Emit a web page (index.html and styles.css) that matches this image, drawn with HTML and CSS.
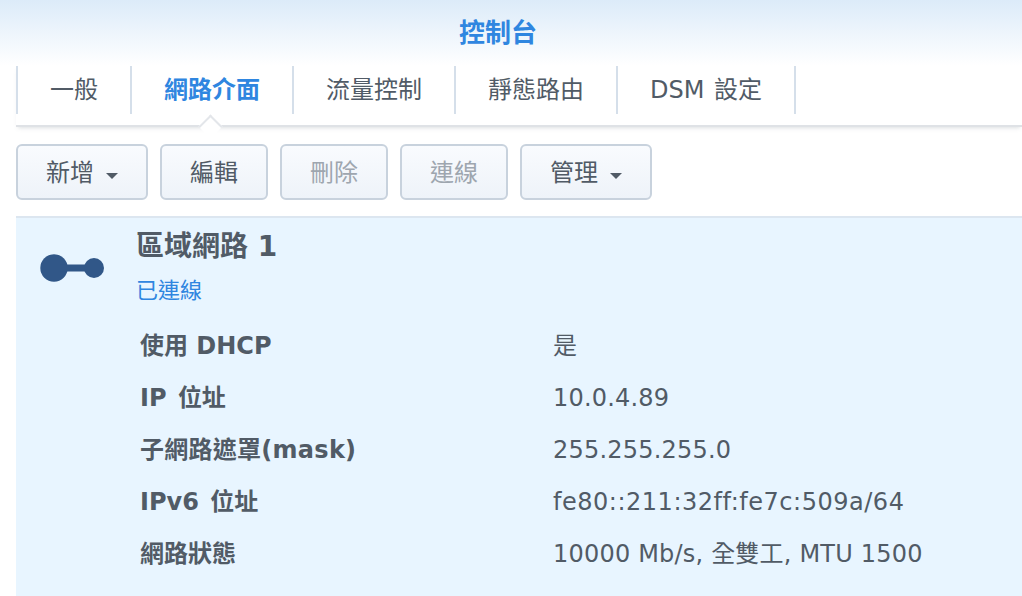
FILE: index.html
```html
<!DOCTYPE html>
<html lang="zh-Hant">
<head>
<meta charset="utf-8">
<title>控制台</title>
<link rel="stylesheet" href="styles.css">
</head>
<body>
<header class="titlebar">控制台</header>
<div class="content">
  <nav class="tabs">
    <a class="tab">一般</a>
    <a class="tab active">網路介面</a>
    <a class="tab">流量控制</a>
    <a class="tab">靜態路由</a>
    <a class="tab spaced">DSM 設定</a>
    <span class="notch"></span>
  </nav>
  <div class="toolbar">
    <button class="btn menu">新增<span class="caret"></span></button>
    <button class="btn">編輯</button>
    <button class="btn off">刪除</button>
    <button class="btn off">連線</button>
    <button class="btn menu">管理<span class="caret"></span></button>
  </div>
  <section class="panel">
    <div class="head">
      <svg class="icon" width="64" height="28" viewBox="0 0 64 28">
        <circle cx="14" cy="14" r="13.7" fill="#315788"/>
        <rect x="20" y="10.5" width="36" height="7" fill="#315788"/>
        <circle cx="54" cy="14" r="10" fill="#315788"/>
      </svg>
      <div class="headtext">
        <h2 class="name">區域網路 1</h2>
        <div class="status">已連線</div>
      </div>
    </div>
    <div class="rows">
      <div class="row"><b class="key">使用 DHCP</b><span class="val">是</span></div>
      <div class="row"><b class="key ip">IP 位址</b><span class="val">10.0.4.89</span></div>
      <div class="row"><b class="key mask">子網路遮罩(mask)</b><span class="val">255.255.255.0</span></div>
      <div class="row"><b class="key ip">IPv6 位址</b><span class="val addr">fe80::211:32ff:fe7c:509a/64</span></div>
      <div class="row"><b class="key">網路狀態</b><span class="val">10000 Mb/s, 全雙工, MTU 1500</span></div>
    </div>
  </section>
</div>
</body>
</html>
```
FILE: styles.css
```css
* { box-sizing: border-box; }
html, body { margin: 0; height: 100%; overflow: hidden; background: #fff; }
body {
  font-family: "DejaVu Sans", "Noto Sans CJK TC", sans-serif;
  font-size: 24px;
  color: #515b66;
}
.titlebar {
  height: 66px;
  padding: 15px 26px 0 0;
  text-align: center;
  font-size: 26px;
  line-height: 36px;
  font-weight: 700;
  color: #2f86e0;
  background: linear-gradient(#dcebf9, #ffffff);
}
.content { padding-left: 16px; }
.tabs {
  position: relative;
  display: flex;
  height: 61px;
  border-bottom: 2px solid #dfe2e6;
  padding-bottom: 11px;
  box-shadow: 0 3px 4px -2px rgba(120,130,140,.25);
}
.tab {
  height: 48px;
  padding: 0 32px;
  line-height: 48px;
  border-right: 2px solid #d5dfea;
  white-space: nowrap;
}
.tab:first-child { border-left: 2px solid #d5dfea; }
.tab.active { color: #2f86e0; font-weight: 700; }
.tab.spaced { word-spacing: 2px; }
.notch {
  position: absolute;
  left: 186px;
  top: 52px;
  width: 17px;
  height: 17px;
  background: #fff;
  border-left: 2px solid #e3e6ea;
  border-top: 2px solid #e3e6ea;
  transform: rotate(45deg);
}
.toolbar {
  display: flex;
  gap: 12px;
  padding-top: 17px;
  height: 89px;
}
.btn {
  height: 56px;
  width: 108px;
  padding: 0 0 4px;
  font: inherit;
  color: inherit;
  background: linear-gradient(#f9fbfe, #eef3f9);
  border: 2px solid #c8d2dd;
  border-radius: 6px;
}
.btn.menu { width: 132px; }
.btn.off { color: #9ea6af; }
.caret {
  display: inline-block;
  margin-left: 12px;
  vertical-align: 2px;
  border-left: 6px solid transparent;
  border-right: 6px solid transparent;
  border-top: 6px solid #515b66;
}
.panel {
  height: 380px;
  background: #e8f5ff;
  border-top: 2px solid #dce6f0;
}
.head { display: flex; align-items: flex-start; padding: 11px 0 0 24px; }
.icon { margin-top: 25px; flex: none; }
.headtext { margin-left: 32px; }
.name { margin: 0; font-size: 28px; line-height: 36px; font-weight: 700; }
.status { margin-top: 11px; font-size: 22px; line-height: 30px; color: #2f86e0; }
.rows { padding: 14px 0 0 124px; }
.row { display: flex; height: 52px; line-height: 52px; white-space: nowrap; }
.key { width: 413px; flex: none; font-weight: 700; }
.key.ip { word-spacing: 3px; }
.key.mask { letter-spacing: .27px; }
.val { letter-spacing: .2px; }
.val.addr { letter-spacing: .52px; }
```
